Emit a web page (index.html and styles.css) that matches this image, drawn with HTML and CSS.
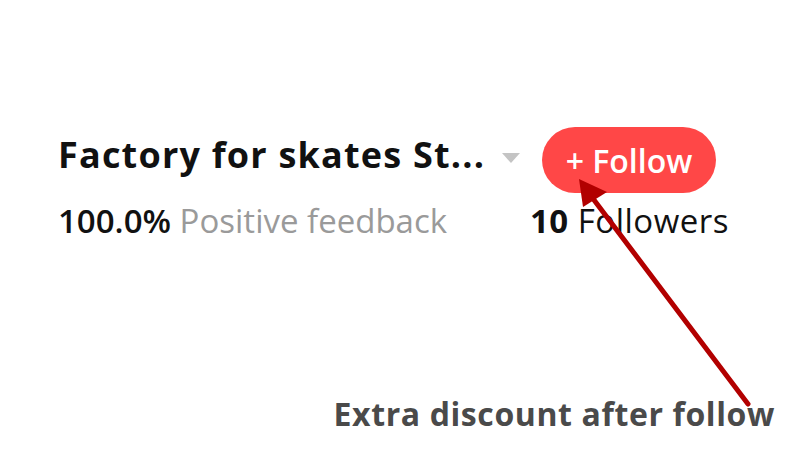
FILE: index.html
```html
<!DOCTYPE html>
<html>
<head>
<meta charset="utf-8">
<link rel="stylesheet" href="styles.css">
</head>
<body>
<div class="page">
  <div class="store">
    <div class="row-top">
      <div class="title">Factory for skates St...</div>
      <div class="caret"></div>
      <button class="follow">+ Follow</button>
    </div>
    <div class="row-bottom">
      <div class="feedback"><span class="rate">100.0%</span> <span class="muted">Positive feedback</span></div>
      <div class="followers"><b>10</b> Followers</div>
    </div>
  </div>
  <div class="note">Extra discount after follow</div>
  <svg class="arrow" width="800" height="454" viewBox="0 0 800 454">
    <line x1="748" y1="404" x2="588" y2="192" stroke="#b20000" stroke-width="5" stroke-linecap="round"/>
    <polygon points="579,179 607,192 583,207" fill="#b20000"/>
  </svg>
</div>
</body>
</html>
```
FILE: styles.css
```css
html, body {
  margin: 0;
  padding: 0;
  background: #ffffff;
}
.page {
  position: relative;
  width: 800px;
  height: 454px;
  overflow: hidden;
  font-family: "Open Sans", "Noto Sans", sans-serif;
  display: flex;
  flex-direction: column;
}
.store {
  padding: 127px 0 0 58px;
}
.row-top {
  display: flex;
  align-items: center;
  height: 66px;
}
.title {
  font-size: 36px;
  font-weight: 700;
  letter-spacing: 1.2px;
  color: #111;
  width: 444px;
  white-space: nowrap;
  margin-bottom: 12px;
}
.caret {
  width: 0;
  height: 0;
  border-left: 9px solid transparent;
  border-right: 9px solid transparent;
  border-top: 10px solid #c4c4c4;
  margin-right: 24px;
  margin-top: -4px;
}
.follow {
  height: 66px;
  width: 174px;
  border: none;
  border-radius: 33px;
  background: #ff4747;
  color: #fff;
  font-family: "Open Sans", "Noto Sans", sans-serif;
  font-size: 32px;
  font-weight: 600;
  padding: 0;
  margin-left: -2px;
}
.row-bottom {
  display: flex;
  margin-top: 5px;
  font-size: 33px;
  color: #111;
}
.rate {
  font-weight: 600;
}
.row-bottom b {
  font-weight: 700;
}
.feedback {
  width: 472px;
}
.followers {
  letter-spacing: 0.5px;
}
.muted {
  color: #9a9a9a;
}
.note {
  align-self: flex-end;
  margin: 149px 25px 0 0;
  font-size: 32px;
  font-weight: 700;
  letter-spacing: 0.6px;
  color: #4a4a4a;
}
.arrow {
  position: absolute;
  left: 0;
  top: 0;
}
```
